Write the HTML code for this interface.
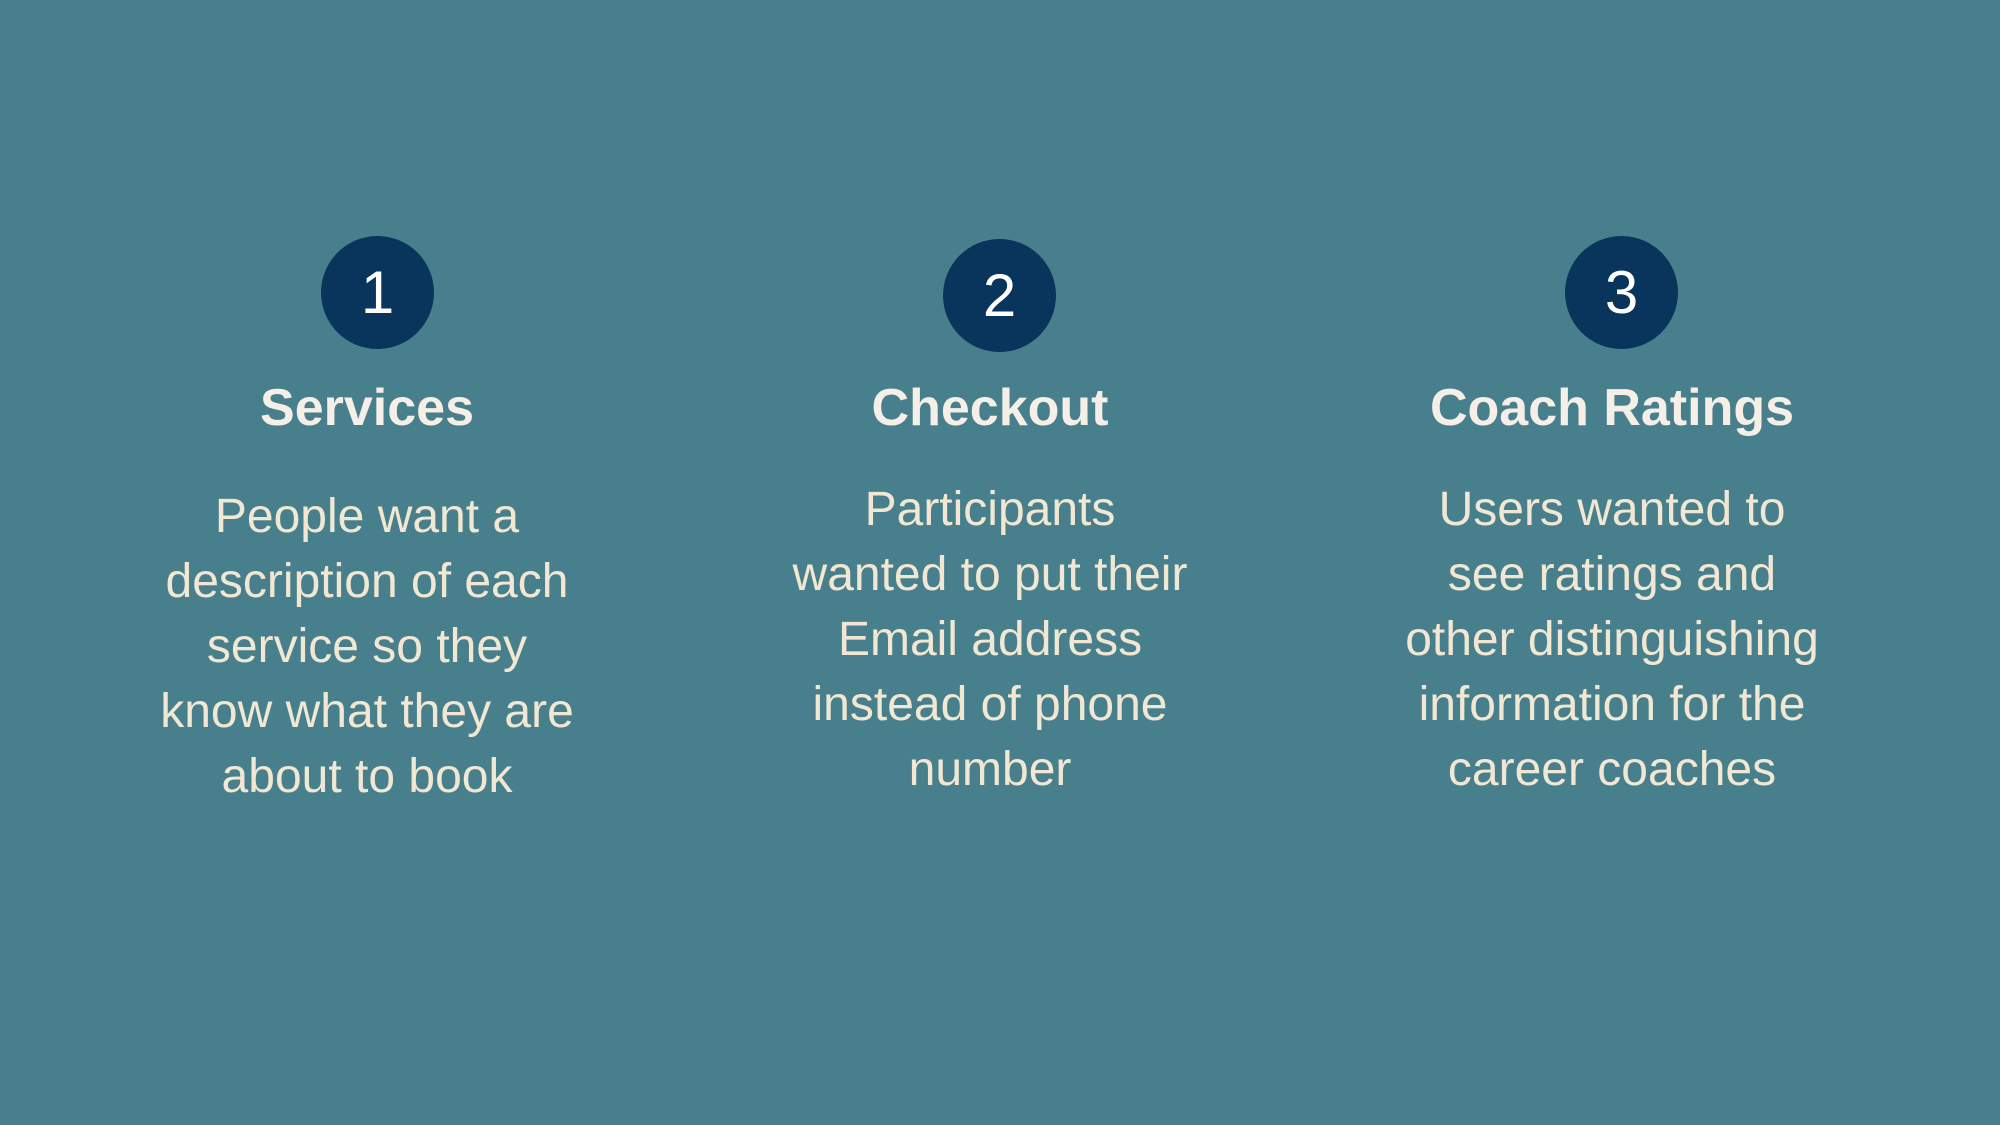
<!DOCTYPE html>
<html><head><style>
html,body{margin:0;padding:0;}
body{width:2000px;height:1125px;background:#47808c;position:relative;overflow:hidden;font-family:"Liberation Sans",Arial,sans-serif;}
.c{position:absolute;width:113px;height:113px;border-radius:50%;background:#09355c;color:#fff;font-size:60px;display:flex;align-items:center;justify-content:center;}
.t{position:absolute;width:600px;text-align:center;font-weight:bold;font-size:52px;line-height:60px;color:#f5efe8;top:378px;}
.b{position:absolute;width:600px;text-align:center;font-size:48px;line-height:65px;color:#f1e7d3;}
</style></head><body>
<div class="c" style="left:321px;top:236px">1</div>
<div class="c" style="left:943px;top:239px">2</div>
<div class="c" style="left:1565px;top:236px">3</div>
<div class="t" style="left:67px">Services</div>
<div class="t" style="left:690px">Checkout</div>
<div class="t" style="left:1312px">Coach Ratings</div>
<div class="b" style="left:67px;top:484px">People want a<br>description of each<br>service so they<br>know what they are<br>about to book</div>
<div class="b" style="left:690px;top:477px">Participants<br>wanted to put their<br>Email address<br>instead of phone<br>number</div>
<div class="b" style="left:1312px;top:477px">Users wanted to<br>see ratings and<br>other distinguishing<br>information for the<br>career coaches</div>
</body></html>
